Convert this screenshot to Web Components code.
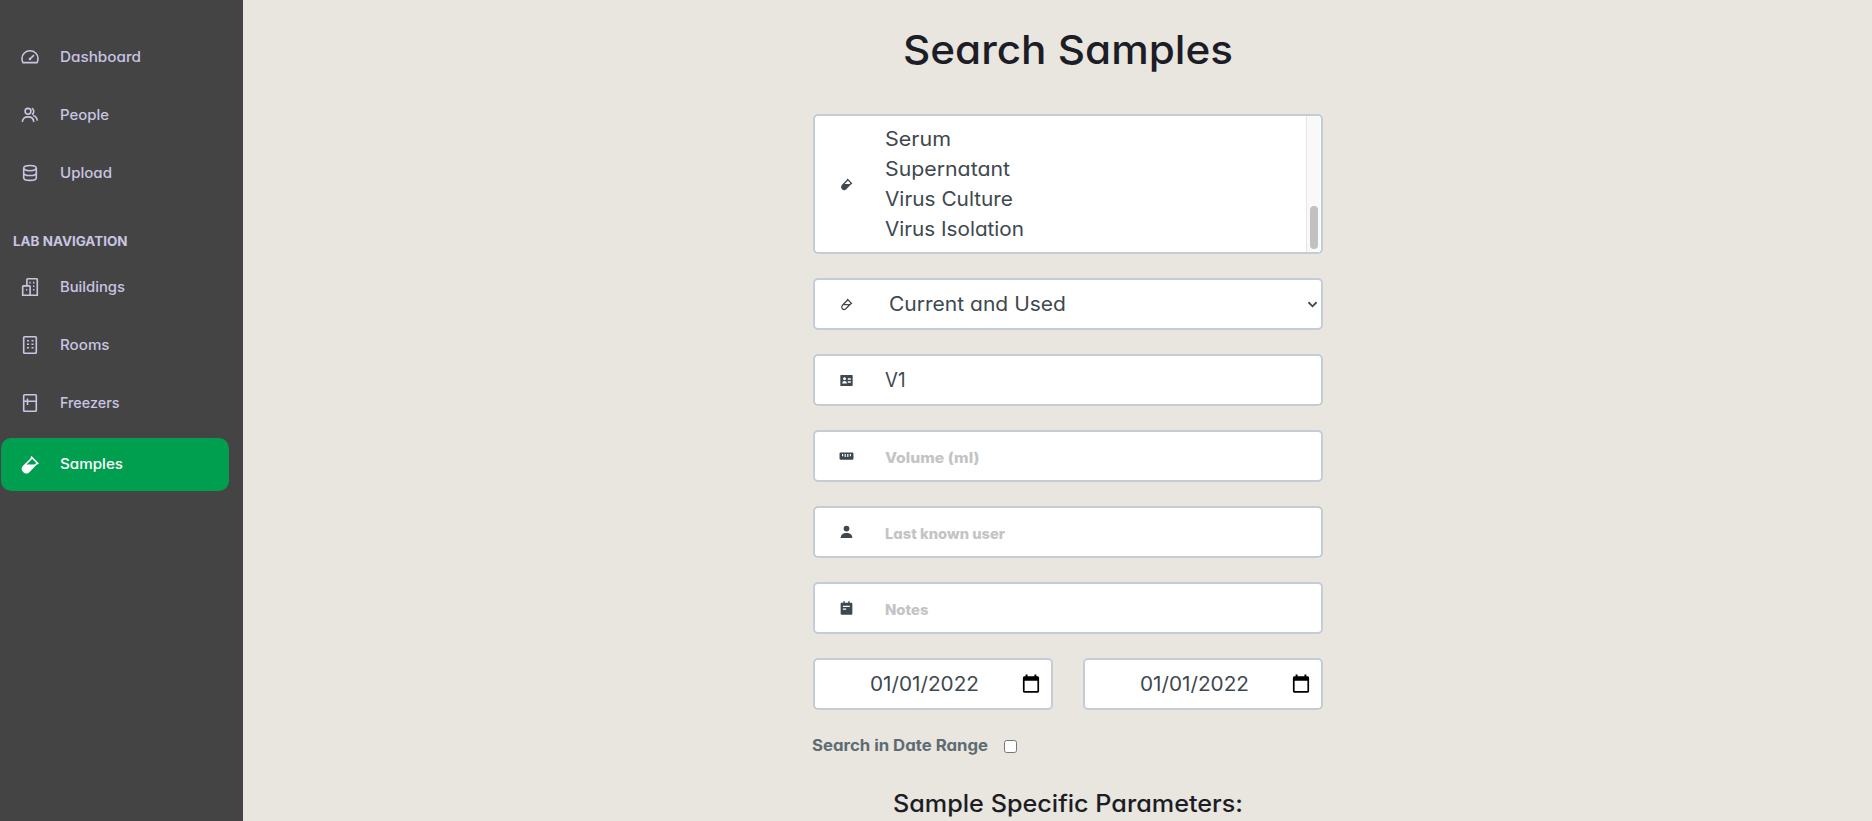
<!DOCTYPE html>
<html lang="en">
<head>
<meta charset="utf-8">
<title>Search Samples</title>
<style>
  html, body { margin: 0; height: 100%; overflow: hidden; }
  body { font-family: Inter, "Open Sans", sans-serif; font-feature-settings: "cv11"; background: #e9e6df; }
</style>
</head>
<body>
<lab-app></lab-app>
<script>
const define = (name, html, setup) => {
  const template = document.createElement('template');
  template.innerHTML = html;
  customElements.define(name, class extends HTMLElement {
    connectedCallback() {
      if (this.shadowRoot) return;
      this.attachShadow({ mode: 'open' }).append(template.content.cloneNode(true));
      if (setup) setup(this, this.shadowRoot);
    }
  });
};

const icons = {
  dashboard: `<path d="M3 15.6Q2 13.8 2 11.4a8 7.6 0 0 1 16 0Q18 13.8 17 15.6Z"/><path d="M9.8 12.1 14 8.2"/><circle cx="9.9" cy="12" r="1.2" fill="currentColor" stroke="none"/>`,
  people: `<circle cx="8" cy="6.3" r="2.9"/><path d="M2.4 17C2.4 13.3 4.8 11.9 8 11.9S13.7 13.3 13.7 17M11.8 3.2c2.6 1 2.6 5.2.2 6.3M13 10.6c2.6.7 4 2.2 4.3 5"/>`,
  upload: `<ellipse cx="10" cy="5.1" rx="6.3" ry="2.6"/><path d="M3.7 5.1v9.6c0 3.6 12.6 3.6 12.6 0V5.1M3.7 9.9c0 3.4 12.6 3.4 12.6 0"/>`,
  buildings: `<path d="M6.9 8.5V2.4a.7.7 0 0 1 .7-.7h9a.7.7 0 0 1 .7.7v15.9H2.7V9.6a.7.7 0 0 1 .7-.7h6a.7.7 0 0 1 .7.7v8.7"/><path d="M9.3 5.6h1.4M13 5.6h1.4M13 9.2h1.4M13 12.8h1.4M6 12.8h1.3" stroke-width="1.6"/>`,
  rooms: `<rect x="3.7" y="1.7" width="12.6" height="16.6" rx=".8"/><path d="M7 5.8h2M11.5 5.8h2M7 9.3h2M11.5 9.3h2M7 12.8h2M11.5 12.8h2"/>`,
  freezers: `<rect x="3.7" y="1.7" width="12.6" height="16.6" rx=".8"/><path d="M3.7 8.3h12.6M7.5 5.6v6.3"/>`,
  tubeFill: `<path d="M11 1.6 18.4 9M12.2 2.8 3.4 11.6a3.7 3.7 0 0 0 5.2 5.2L17.2 8"/><path d="M5.800 9.400h9.900l-7.100 7.400a3.700 3.700 0 0 1-5.200-5.200Z" fill="currentColor" stroke="none"/>`,
  tube: `<path d="M11 1.6 18.4 9M12.2 2.8 3.4 11.6a3.7 3.7 0 0 0 5.2 5.2L17.2 8M5.8 10.200h9.2"/>`,
  card: `<path fill="currentColor" stroke="none" fill-rule="evenodd" d="M1.5 1.700h17a1 1 0 0 1 1 1v14.600a1 1 0 0 1-1 1h-17a1 1 0 0 1-1-1V2.700a1 1 0 0 1 1-1ZM7 5a2.300 2.300 0 1 0 .01 0ZM3.500 14.500h7c0-4.800-7-4.800-7 0ZM12 6.600v2.200h4.700V6.600ZM12 11.200v2.200h4.700v-2.200Z"/>`,
  ruler: `<rect x="-.7" y="3.900" width="21.400" height="11" rx="1.800" fill="currentColor" stroke="none"/><path stroke="#fff" stroke-width="1.800" d="M4 6.200v3.600M8 6.200v4.600M12 6.200v4.600M16 6.200v3.600"/>`,
  user: `<circle cx="10" cy="4" r="4.400" fill="currentColor" stroke="none"/><path fill="currentColor" stroke="none" d="M1 18.500c0-5 3.500-7.800 9-7.800s9 2.800 9 7.800Z"/>`,
  note: `<rect x="1" y="1" width="18" height="18.500" rx="1.500" fill="currentColor" stroke="none"/><path stroke-width="2.200" d="M6.200-1v3M13.800-1v3"/><path stroke="#fff" stroke-width="2" d="M4.500 6.800h10.500M4.500 11h5"/>`,
  calendar: `<path fill="currentColor" stroke="none" fill-rule="evenodd" d="M4-.5h2.200v2h7.600v-2H16v2h1.500A1.600 1.600 0 0 1 19 3.200v14.800a1.600 1.600 0 0 1-1.500 1.700h-15A1.600 1.600 0 0 1 1 18V3.200A1.600 1.600 0 0 1 2.500 1.500H4ZM2.900 6.500v11.400h14.200V6.500Z"/>`,
  chevron: `<path stroke-width="4" d="m1 5 9 9 9-9"/>`
};

define('lab-icon', `<style>
  :host { display: block; width: 20px; height: 20px; flex: none; }
  svg { display: block; width: 100%; height: 100%; overflow: visible; fill: none; stroke: currentColor; stroke-width: var(--icon-stroke, 1.6); }
</style><svg viewBox="0 0 20 20"></svg>`, (el, root) => {
  root.querySelector('svg').innerHTML = icons[el.getAttribute('name')];
});

/* Widens its text so that the run fills the given width. */
define('fit-text', `<style>:host { display: inline-block; white-space: nowrap; text-align: left; } span { display: inline-block; transform-origin: 0 50%; }</style><span><slot></slot></span>`, (el, root) => {
  const span = root.querySelector('span');
  const wanted = Number(el.getAttribute('width'));
  const natural = span.getBoundingClientRect().width;
  el.style.width = wanted + 'px';
  span.style.transform = `scaleX(${wanted / natural})`;
});

define('nav-item', `<style>
  :host { display: flex; align-items: center; height: 52px; margin: 0 14px 6px 1px; padding-left: 19px; gap: 19.500px;
    box-sizing: border-box; border-radius: 10px; color: #c9c5e3; font-size: 14.4px; font-weight: 500; line-height: 20px; }
  :host([active]) { height: 53px; margin-top: 9px; background: #009e4f; color: #fff; }
  :host([active]) slot { display: block; padding-bottom: 1px; }
</style><lab-icon></lab-icon><slot></slot>`, (el, root) => {
  const icon = document.createElement('lab-icon');
  icon.setAttribute('name', el.getAttribute('icon'));
  root.querySelector('lab-icon').replaceWith(icon);
});

define('side-nav', `<style>
  :host { display: block; width: 243px; height: 100%; background: #444; padding-top: 31px; box-sizing: border-box; flex: none; }
  h3 { margin: 31px 0 9px 13px; font-size: 13px; font-weight: 700; line-height: 22px; color: #c9c5e3; }
</style>
<nav-item icon="dashboard"><fit-text width="81">Dashboard</fit-text></nav-item>
<nav-item icon="people"><fit-text width="49">People</fit-text></nav-item>
<nav-item icon="upload"><fit-text width="52">Upload</fit-text></nav-item>
<h3><fit-text width="114.500">LAB NAVIGATION</fit-text></h3>
<nav-item icon="buildings"><fit-text width="65">Buildings</fit-text></nav-item>
<nav-item icon="rooms"><fit-text width="49.500">Rooms</fit-text></nav-item>
<nav-item icon="freezers"><fit-text width="59.500">Freezers</fit-text></nav-item>
<nav-item icon="tubeFill" active><fit-text width="63">Samples</fit-text></nav-item>`);

define('form-field', `<style>
  :host { display: flex; align-items: center; height: 52px; box-sizing: border-box; border: 2px solid #c5cdd4; border-radius: 5px;
    background: #fff; color: #3e484e; font-size: 19.600px; line-height: 30px; padding-left: 25px; --icon-stroke: 2; }
  :host([tall]) { height: 140px; }
  :host([date]) { padding: 0 11px 0 55px; justify-content: space-between; }
  .lead { width: 13px; height: 13px; margin-right: 31.500px; color: #3e484e; }
  :host([date]) .lead { display: none; }
  :host([placeholder]) { color: #c4c4c4; font-size: 14.500px; font-weight: 800; }
  :host([placeholder]) slot { display: block; padding-top: 3px; }
</style><lab-icon class="lead"></lab-icon><slot></slot>`, (el, root) => {
  const icon = document.createElement('lab-icon');
  icon.className = 'lead';
  icon.setAttribute('name', el.getAttribute('icon') || 'calendar');
  root.querySelector('lab-icon').replaceWith(icon);
});

define('option-list', `<style>
  :host { display: flex; flex: 1; height: 100%; }
  .options { flex: 1; display: flex; flex-direction: column; padding-top: 8px; }
  .track { width: 8px; padding: 90px 2px 0 3px; margin-right: 1px; border-left: 1px solid #e6e6e6; background: #f9f9f9; }
  .thumb { height: 43px; border-radius: 4px; background: #c1c1c1; }
</style><div class="options"><slot></slot></div><div class="track"><div class="thumb"></div></div>`);

define('search-form', `<style>
  :host { display: flex; flex-direction: column; width: 510px; }
  h1, h2 { margin: 0; text-align: center; color: #1c1d26; font-weight: 500; white-space: nowrap; }
  h1 { font-size: 40px; line-height: 60px; margin: 20px 0 34px; }
  h2 { font-size: 23.700px; line-height: 36px; margin-top: 26px; }
  .fields { display: flex; flex-direction: column; gap: 24px; }
  .dates { display: grid; grid-template-columns: 1fr 1fr; gap: 30px; }
  .cal { width: 18px; height: 18px; color: #000; }
  .arrow { width: 9px; height: 9px; margin-left: auto; margin-right: 4px; }
  .pad { margin-left: 4.500px; }
  label { display: flex; align-items: center; margin-top: 20px; height: 30px; color: #5f6b72; font-size: 15.800px; font-weight: 700; }
  label fit-text { margin-left: -1px; }
  input { width: 13px; height: 13px; margin: 3px 0 0 16px; }
</style>
<h1><fit-text width="330">Search Samples</fit-text></h1>
<div class="fields">
  <form-field tall icon="tubeFill"><option-list>
    <fit-text width="66">Serum</fit-text><fit-text width="125">Supernatant</fit-text>
    <fit-text width="128">Virus Culture</fit-text><fit-text width="139">Virus Isolation</fit-text>
  </option-list></form-field>
  <form-field icon="tube"><fit-text class="pad" width="177">Current and Used</fit-text><lab-icon class="arrow" name="chevron"></lab-icon></form-field>
  <form-field icon="card"><fit-text width="20.500">V1</fit-text></form-field>
  <form-field placeholder icon="ruler"><fit-text width="94.500">Volume (ml)</fit-text></form-field>
  <form-field placeholder icon="user"><fit-text width="120">Last known user</fit-text></form-field>
  <form-field placeholder icon="note"><fit-text width="43.500">Notes</fit-text></form-field>
  <div class="dates">
    <form-field date><fit-text width="109">01/01/2022</fit-text><lab-icon class="cal" name="calendar"></lab-icon></form-field>
    <form-field date><fit-text width="109">01/01/2022</fit-text><lab-icon class="cal" name="calendar"></lab-icon></form-field>
  </div>
</div>
<label><fit-text width="176">Search in Date Range</fit-text><input type="checkbox"></label>
<h2><fit-text width="350">Sample Specific Parameters:</fit-text></h2>`);

define('lab-app', `<style>
  :host { display: flex; height: 100vh; overflow: hidden; }
  main { flex: 1; display: flex; justify-content: center; align-items: flex-start; padding-left: 21px; }
</style><side-nav></side-nav><main><search-form></search-form></main>`);
</script>
</body>
</html>
